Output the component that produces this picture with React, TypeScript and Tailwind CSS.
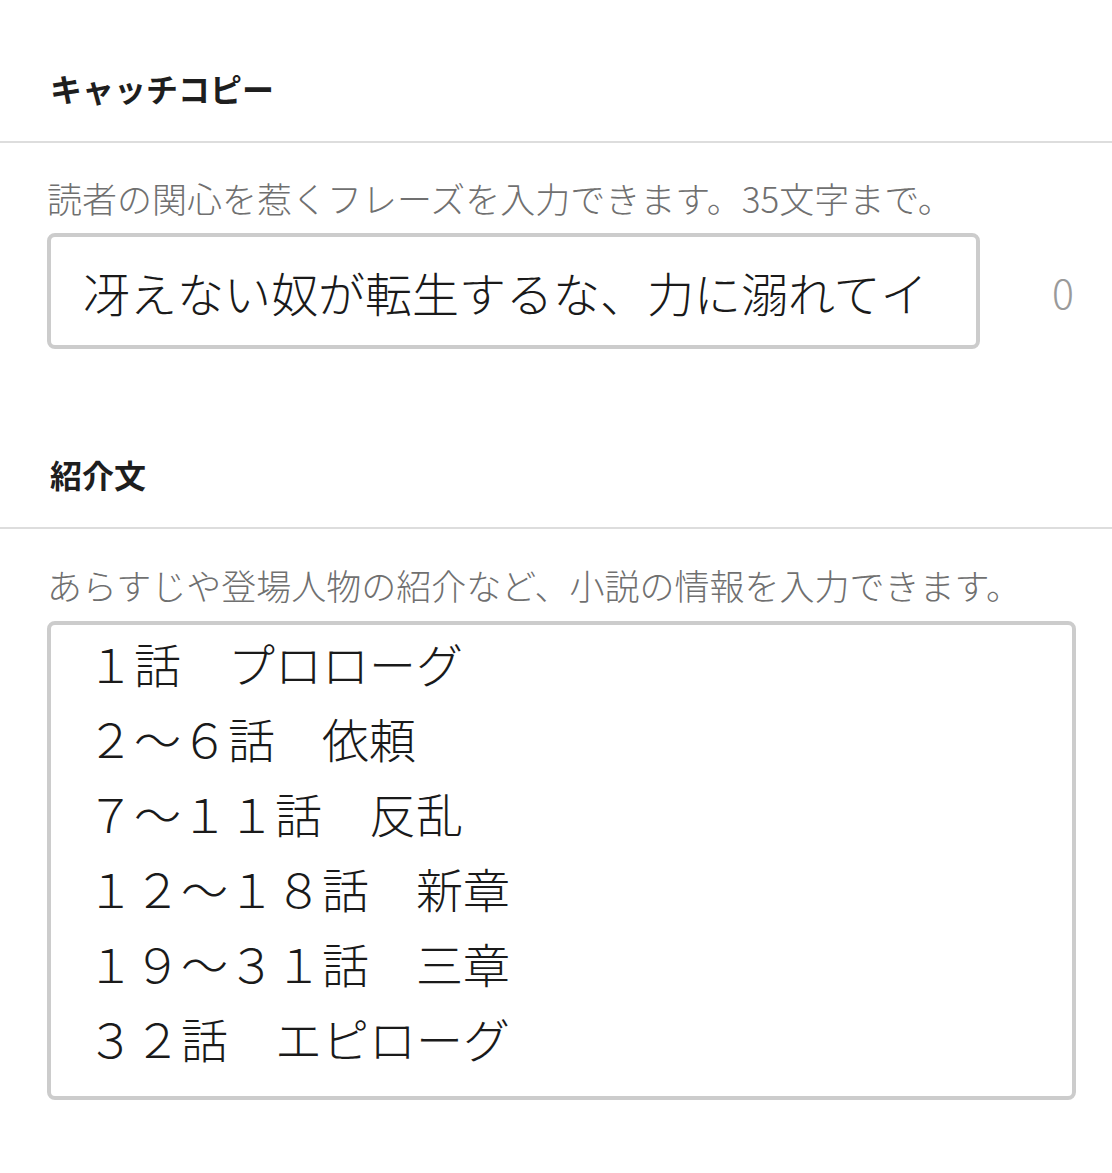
import { useState } from 'react';

const font = { fontFamily: '"Noto Sans CJK JP", "Noto Sans", sans-serif' };

const synopsis = [
  '１話　プロローグ',
  '２～６話　依頼',
  '７～１１話　反乱',
  '１２～１８話　新章',
  '１９～３１話　三章',
  '３２話　エピローグ',
].join('\n');

function SectionHeader({ title }: { title: string }) {
  return (
    <div className="border-b-2 border-[#dddddd] pl-[50px] pt-[66px] pb-[31px]">
      <h2 className="text-[32px] leading-[44px] font-bold text-[#1e1e1e]">{title}</h2>
    </div>
  );
}

export default function App() {
  const [catchCopy, setCatchCopy] = useState('冴えない奴が転生するな、力に溺れてイ');
  const [intro, setIntro] = useState(synopsis);

  return (
    <div className="w-[1112px] min-h-[1173px] bg-white" style={font}>
      {/* キャッチコピー */}
      <section>
        <SectionHeader title="キャッチコピー" />
        <p className="mt-[31px] pl-[47px] text-[35px] font-light leading-[48px] text-[#707070]">
          読者の関心を惹くフレーズを入力できます。35文字まで。
        </p>
        <div className="mt-[11px] flex items-center pl-[47px]">
          <input
            value={catchCopy}
            onChange={(e) => setCatchCopy(e.target.value)}
            className="h-[116px] w-[933px] rounded-[8px] border-4 border-[#cccccc] bg-white pl-[32px] pr-[8px] text-[47px] font-light text-[#1a1a1a] outline-none"
            style={font}
          />
          <span className="flex-1 pr-[38px] text-right text-[41px] font-light leading-none text-[#9a9a9a]">0</span>
        </div>
      </section>

      {/* 紹介文 */}
      <section className="mt-[37px]">
        <SectionHeader title="紹介文" />
        <p className="mt-[32px] pl-[47px] text-[35px] font-light leading-[48px] text-[#707070]">
          あらすじや登場人物の紹介など、小説の情報を入力できます。
        </p>
        <div className="mt-[12px] pl-[47px]">
          <textarea
            value={intro}
            onChange={(e) => setIntro(e.target.value)}
            className="block h-[479px] w-[1029px] resize-none overflow-hidden rounded-[8px] border-4 border-[#cccccc] bg-white pl-[36px] pr-[8px] pt-0 text-[47px] font-light leading-[75px] text-[#1a1a1a] outline-none"
            style={font}
          />
        </div>
      </section>
    </div>
  );
}
